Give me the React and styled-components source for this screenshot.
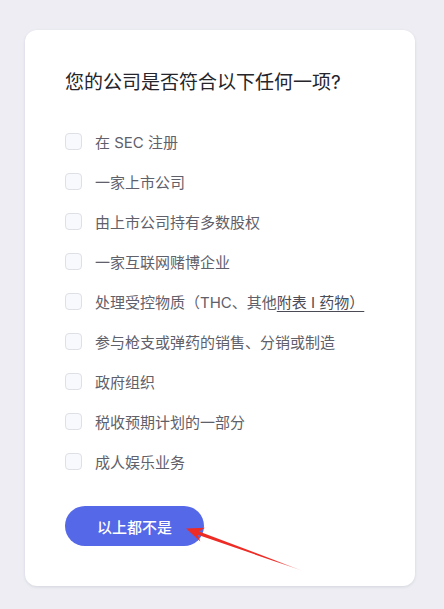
import React from 'react'
import styled, { createGlobalStyle } from 'styled-components'

const GlobalStyle = createGlobalStyle`
  html, body {
    margin: 0;
    padding: 0;
    background: #ededf3;
  }
  body {
    font-family: 'Inter', 'Noto Sans CJK SC', sans-serif;
  }
`

const Page = styled.div`
  position: relative;
  width: 444px;
  height: 609px;
  padding: 30px 29px 23px 25px;
  box-sizing: border-box;
`

const Card = styled.div`
  background: #fff;
  border-radius: 12px;
  box-shadow: 0 1px 3px rgba(40, 40, 80, 0.12);
  padding: 40px;
  height: 556px;
  box-sizing: border-box;
`

const Title = styled.h2`
  margin: 0 0 25px;
  font-size: 19px;
  line-height: 26px;
  font-weight: 400;
  color: #25252b;
`

const List = styled.div`
  display: flex;
  flex-direction: column;
`

const Row = styled.label`
  display: flex;
  align-items: center;
  gap: 13px;
  height: 40px;
  font-size: 15px;
  color: #60606a;
`

const Box = styled.span`
  width: 17px;
  height: 17px;
  flex: none;
  box-sizing: border-box;
  border: 1px solid #dfe0e6;
  border-radius: 4px;
  background: #f8f9fc;
`

const Link = styled.span`
  text-decoration: underline;
  text-underline-offset: 3px;
  color: #4b4b55;
`

const Button = styled.button`
  margin-top: 25px;
  width: 139px;
  height: 40px;
  border: none;
  border-radius: 20px;
  background: #5468e8;
  color: #fff;
  font-family: inherit;
  font-size: 15px;
  font-weight: 500;
  cursor: pointer;
`

const Arrow = styled.svg`
  position: absolute;
  left: 0;
  top: 0;
  pointer-events: none;
`

const options = [
  '在 SEC 注册',
  '一家上市公司',
  '由上市公司持有多数股权',
  '一家互联网赌博企业',
  null,
  '参与枪支或弹药的销售、分销或制造',
  '政府组织',
  '税收预期计划的一部分',
  '成人娱乐业务',
]

export default function App() {
  return (
    <>
      <GlobalStyle />
      <Page>
        <Card>
          <Title>您的公司是否符合以下任何一项?</Title>
          <List>
            {options.map((text, i) => (
              <Row key={i}>
                <Box />
                {text === null ? (
                  <span>
                    处理受控物质（THC、其他<Link>附表 I 药物）</Link>
                  </span>
                ) : (
                  <span>{text}</span>
                )}
              </Row>
            ))}
          </List>
          <Button>以上都不是</Button>
        </Card>
        <Arrow width="444" height="609" viewBox="0 0 444 609">
          <defs>
            <linearGradient id="fade" x1="187" y1="529" x2="303" y2="571" gradientUnits="userSpaceOnUse">
              <stop offset="0" stopColor="#ee2b25" />
              <stop offset="0.75" stopColor="#ee2b25" />
              <stop offset="1" stopColor="#ee2b25" stopOpacity="0.2" />
            </linearGradient>
          </defs>
          <polygon
            points="186,528.6 205,527.8 199,531.4 303,571 197.6,534.8 200.4,541.4"
            fill="url(#fade)"
          />
        </Arrow>
      </Page>
    </>
  )
}
